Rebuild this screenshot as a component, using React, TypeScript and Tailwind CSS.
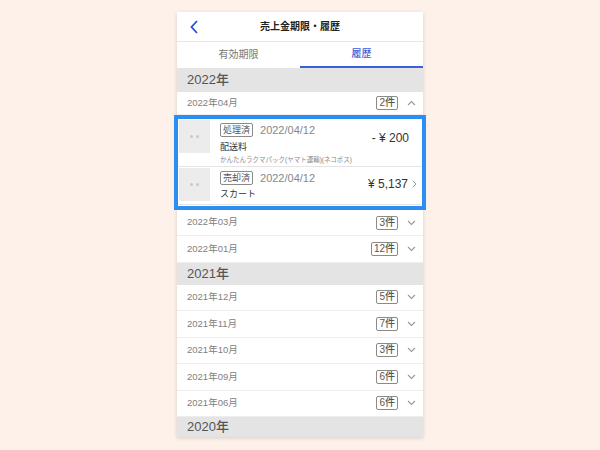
import React from "react"

const font = { fontFamily: '"Liberation Sans", "Noto Sans CJK JP", sans-serif' }

function Chevron({ up = false }: { up?: boolean }) {
  return (
    <svg width="9" height="6" viewBox="0 0 9 6" className="text-[#999]">
      <polyline
        points={up ? "1,5 4.5,1.5 8,5" : "1,1 4.5,4.5 8,1"}
        fill="none"
        stroke="currentColor"
        strokeWidth="1.1"
      />
    </svg>
  )
}

function YearHeader({ label, h }: { label: string; h: string }) {
  return (
    <div className={`${h} flex items-center bg-[#e4e4e4] pl-[10px] text-[13px] font-medium text-[#555]`}>
      {label}
    </div>
  )
}

function MonthRow({ label, count, up = false, h = "h-[26.5px]" }: { label: string; count: string; up?: boolean; h?: string }) {
  return (
    <div className={`${h} flex items-center border-b border-[#eeeeee] pl-[10px] pr-[7px]`}>
      <span className="flex-1 text-[9.5px] text-[#808080]">{label}</span>
      <span className="flex h-[14px] items-center rounded-[2px] border border-[#8a8a8a] px-[2px] text-[10px] font-medium leading-none text-[#555]">
        {count}
      </span>
      <span className="ml-[9px] flex w-[9px] items-center">
        <Chevron up={up} />
      </span>
    </div>
  )
}

function Thumb({ h }: { h: string }) {
  return (
    <div className={`${h} ml-[1px] mt-[1px] flex w-[31px] shrink-0 items-center justify-center gap-[3px] bg-[#ececec]`}>
      <span className="h-[3px] w-[3px] rounded-full bg-[#c8c8c8]" />
      <span className="h-[3px] w-[3px] rounded-full bg-[#c8c8c8]" />
    </div>
  )
}

function Badge({ text }: { text: string }) {
  return (
    <span className="flex h-[14px] items-center rounded-[2px] border border-[#8a8a8a] px-[2px] text-[9px] leading-none text-[#555]">
      {text}
    </span>
  )
}

export default function App() {
  return (
    <div style={font} className="h-[450px] w-[600px] bg-[#fdf1e9] pt-[12px]">
      <div className="mx-auto flex h-[425px] w-[246px] flex-col bg-white shadow-[0_1px_4px_rgba(0,0,0,0.15)]">
        <div className="relative flex h-[30px] items-center justify-center border-b border-[#e6e6e6]">
          <svg width="8" height="14" viewBox="0 0 8 14" className="absolute left-[13px] top-[8px]">
            <polyline points="7,1 1.5,7 7,13" fill="none" stroke="#2650d8" strokeWidth="1.8" />
          </svg>
          <span className="text-[10px] font-bold text-[#222]">売上金期限・履歴</span>
        </div>
        <div className="flex h-[26px]">
          <div className="flex flex-1 items-center justify-center text-[10px] text-[#777]">有効期限</div>
          <div className="flex flex-1 items-center justify-center border-b-2 border-[#3b5fd8] text-[10px] font-medium text-[#3b5fd8]">
            履歴
          </div>
        </div>

        <YearHeader label="2022年" h="h-[24px]" />
        <MonthRow label="2022年04月" count="2件" up h="h-[23px]" />

        <div className="-mx-[3px] h-[95px] border-4 border-[#2a8ef2]">
          <div className="flex h-[48px] border-b border-[#e4e4e4]">
            <Thumb h="h-[33px]" />
            <div className="flex flex-1 flex-col pl-[10px] pt-[3px]">
              <div className="flex items-center gap-[7px]">
                <Badge text="処理済" />
                <span className="text-[11px] text-[#888]">2022/04/12</span>
              </div>
              <span className="mt-[2px] text-[9px] leading-[14px] text-[#333]">配送料</span>
              <span className="text-[6.5px] leading-[12px] text-[#888]">かんたんラクマパック(ヤマト運輸)(ネコポス)</span>
            </div>
            <div className="flex items-start pr-[13px] pt-[10px] text-[12px] text-[#333]">- ¥ 200</div>
          </div>
          <div className="flex h-[38px] border-b border-[#e4e4e4]">
            <Thumb h="h-[33px]" />
            <div className="flex flex-1 flex-col pl-[10px] pt-[3px]">
              <div className="flex items-center gap-[7px]">
                <Badge text="売却済" />
                <span className="text-[11px] text-[#888]">2022/04/12</span>
              </div>
              <span className="mt-[1px] text-[9px] leading-[14px] text-[#333]">スカート</span>
            </div>
            <div className="flex items-center gap-[4px] pr-[5px] pb-[3px] text-[12px] text-[#333]">
              ¥ 5,137
              <svg width="5" height="8" viewBox="0 0 5 8">
                <polyline points="1,1 4,4 1,7" fill="none" stroke="#999" strokeWidth="1" />
              </svg>
            </div>
          </div>
        </div>

        <MonthRow label="2022年03月" count="3件" />
        <MonthRow label="2022年01月" count="12件" />
        <YearHeader label="2021年" h="h-[22px]" />
        <MonthRow label="2021年12月" count="5件" />
        <MonthRow label="2021年11月" count="7件" />
        <MonthRow label="2021年10月" count="3件" />
        <MonthRow label="2021年09月" count="6件" />
        <MonthRow label="2021年06月" count="6件" />
        <YearHeader label="2020年" h="h-[20px]" />
      </div>
    </div>
  )
}
